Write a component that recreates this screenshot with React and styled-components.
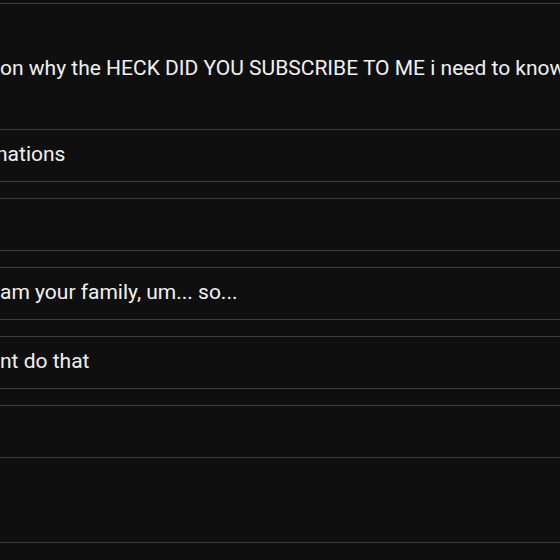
import styled, { createGlobalStyle } from 'styled-components';

const GlobalStyle = createGlobalStyle`
  html, body {
    margin: 0;
    padding: 0;
    background: #0f0f0f;
  }
  body {
    font-family: Roboto, "Liberation Sans", Arial, sans-serif;
    color: #f1f1f1;
    overflow: hidden;
  }
`;

const Page = styled.div`
  width: 560px;
  height: 560px;
  padding-top: 3px;
  box-sizing: border-box;
  display: flex;
  flex-direction: column;
  overflow: hidden;
`;

const Question = styled.div`
  height: 127px;
  padding-top: 53px;
  box-sizing: border-box;
  border-top: 1px solid #3f3f3f;
  border-bottom: 1px solid #3f3f3f;
`;

const Line = styled.p`
  margin: 0;
  font-size: 21px;
  line-height: 23px;
  white-space: nowrap;
  text-indent: ${(p) => p.$indent || 0}px;
`;

const Answer = styled.div`
  height: 51px;
  border-bottom: 1px solid #3f3f3f;
  display: flex;
  align-items: flex-start;
  overflow: hidden;

  & > p {
    margin-top: 13px;
  }
`;

const Options = styled.div`
  display: flex;
  flex-direction: column;
  gap: 16px;
  margin-top: 16px;
`;

const Option = styled.div`
  height: 51px;
  border-top: 1px solid #3f3f3f;
  border-bottom: 1px solid #3f3f3f;
  display: flex;
  align-items: flex-start;

  & > p {
    margin-top: 13px;
  }
`;

const Footer = styled.div`
  margin-top: 84px;
  border-top: 1px solid #3f3f3f;
  flex: 1;
`;

const options = ['', 'am your family, um... so...', 'nt do that', ''];

export default function App() {
  return (
    <>
      <GlobalStyle />
      <Page>
        <Question>
          <Line>on why the HECK DID YOU SUBSCRIBE TO ME i need to know</Line>
        </Question>
        <Answer>
          <Line $indent={-4}>nations</Line>
        </Answer>
        <Options>
          {options.map((text, i) => (
            <Option key={i}>{text && <Line>{text}</Line>}</Option>
          ))}
        </Options>
        <Footer />
      </Page>
    </>
  );
}
